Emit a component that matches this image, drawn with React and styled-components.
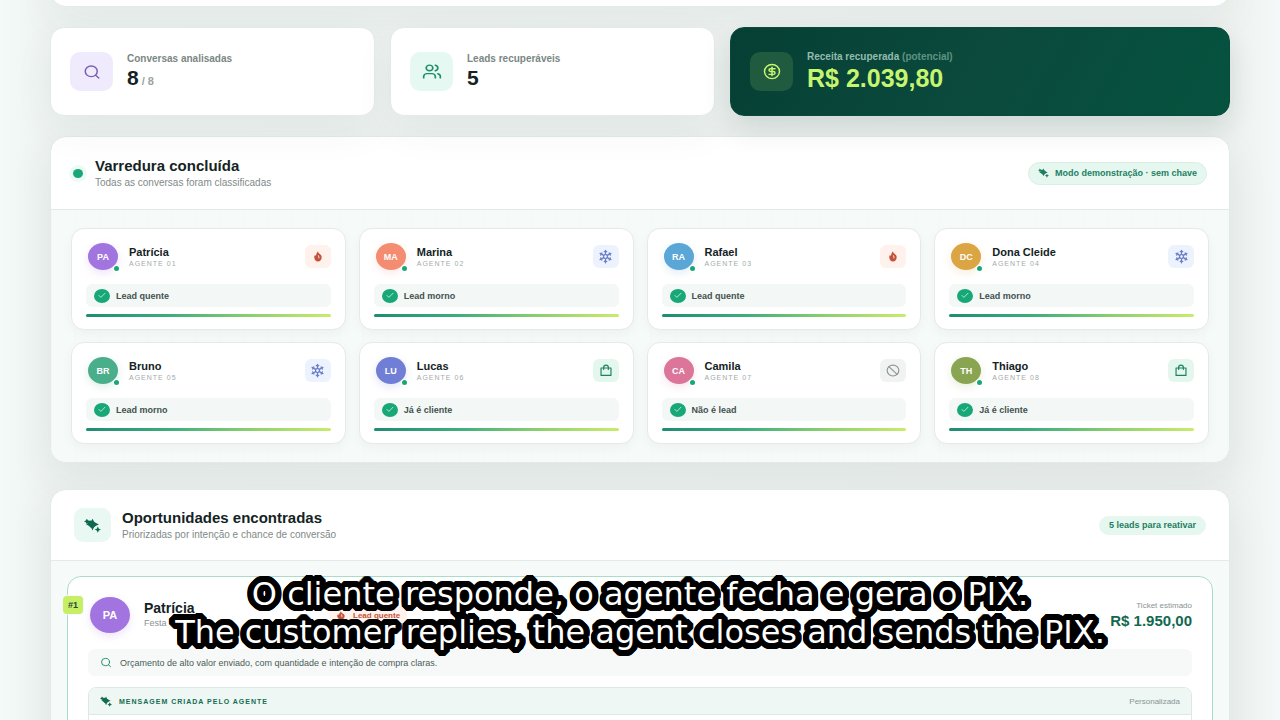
import React from "react";
import styled, { createGlobalStyle, css } from "styled-components";
import { Search, Users, CircleDollarSign, Ban, Check } from "lucide-react";
import { TbSnowflake } from "react-icons/tb";

const Global = createGlobalStyle`
  *, *::before, *::after { box-sizing: border-box; }
  body {
    margin: 0;
    background: #f2f8f6;
    color: #14231f;
    font-family: "Liberation Sans", Arial, sans-serif;
  }
  h2, h3, p { margin: 0; }
`;

const tones = {
  hot: { bg: "#fff1ec", fg: "#c4523a" },
  warm: { bg: "#edf3fe", fg: "#6b7fc8" },
  client: { bg: "#e4f7ef", fg: "#1d8262" },
  none: { bg: "#f1f3f3", fg: "#8f9696" },
};

const Page = styled.div`
  position: relative;
  display: flow-root;
  height: 100vh;
  overflow: hidden;
  padding: 0 50px;
  background: linear-gradient(90deg, #f3faf7 0, #eef3f1 50px, #eef2f0 calc(100% - 50px), #f3f9f8 100%);
`;

const surface = css`
  background: #fff;
  border: 1px solid #e3eae8;
  box-shadow: 0 14px 40px rgba(20, 60, 48, 0.06);
`;

const TopPanel = styled.div`
  ${surface}
  height: 40px;
  margin-top: -33px;
  border-radius: 16px;
`;

const Stats = styled.section`
  display: grid;
  grid-template-columns: 13fr 13fr 20fr;
  gap: 15px;
  margin-top: 20px;
`;

const StatCard = styled.article`
  ${surface}
  display: flex;
  align-items: center;
  gap: 14px;
  height: 89px;
  padding: 0 19px;
  border-radius: 14px;
  ${(p) =>
    p.$dark &&
    css`
      background: linear-gradient(120deg, #063f34, #0b4a3d 50%, #05523f);
      border-color: #0a4a3c;
      box-shadow: 0 12px 28px rgba(6, 50, 40, 0.14);
    `}
`;

const StatIcon = styled.span`
  display: grid;
  place-items: center;
  width: 43px;
  height: 39px;
  border-radius: 10px;
  background: ${(p) => p.$bg};
  color: ${(p) => p.$fg};
`;

const StatLabel = styled.p`
  font-size: 10px;
  line-height: 12px;
  font-weight: 700;
  color: ${(p) => (p.$dark ? "#93bcaf" : "#7b8784")};
  span { color: #5d9382; }
`;

const StatValue = styled.p`
  font-size: ${(p) => (p.$dark ? "25px" : "21px")};
  line-height: ${(p) => (p.$dark ? "30px" : "26px")};
  font-weight: 700;
  color: ${(p) => (p.$dark ? "#c6f56f" : "#14231f")};
  small {
    margin-left: 3px;
    font-size: 11px;
    line-height: 12px;
    color: #9aa3a1;
  }
`;

const Panel = styled.section`
  ${surface}
  margin-top: ${(p) => p.$gap};
  border-radius: 16px;
  overflow: hidden;
  box-shadow: 0 16px 44px rgba(20, 60, 48, 0.08);
`;

const PanelHead = styled.header`
  display: flex;
  align-items: center;
  gap: ${(p) => (p.$tight ? "11px" : "12px")};
  height: ${(p) => (p.$tight ? "71px" : "73px")};
  padding: 0 ${(p) => (p.$tight ? "23px" : "22px")};
  border-bottom: 1px solid #e3eae8;
`;

const HeadText = styled.div`
  flex: 1;
`;

const Title = styled.h2`
  font-size: 15px;
  line-height: 20px;
  font-weight: 700;
`;

const Subtitle = styled.p`
  font-size: 10px;
  line-height: 14px;
  color: #7f8a88;
`;

const LiveDot = styled.span`
  width: 10px;
  height: 9px;
  border-radius: 50%;
  background: #18a878;
  box-shadow: 0 0 0 4px #eefaf5;
`;

const HeadIcon = styled.span`
  display: grid;
  place-items: center;
  width: 37px;
  height: 34px;
  border-radius: 9px;
  background: #eaf8f3;
  color: #0f6a50;
`;

const Pill = styled.span`
  display: flex;
  align-items: center;
  gap: 6px;
  height: ${(p) => (p.$outlined ? "23px" : "19px")};
  padding: 0 9px;
  border: 1px solid ${(p) => (p.$outlined ? "#d9efe6" : "#e6f7f0")};
  border-radius: 12px;
  background: #e6f7f0;
  color: #1d7f60;
  font-size: 9px;
  font-weight: 700;
  white-space: nowrap;
`;

const AgentGrid = styled.div`
  display: grid;
  grid-template-columns: repeat(4, 1fr);
  gap: 12px 13px;
  padding: 18px 20px;
  background:
    repeating-linear-gradient(90deg, rgba(20, 80, 60, 0.01) 0 1px, transparent 1px 24px),
    #f6faf9;
`;

const AgentCard = styled.article`
  ${surface}
  height: 102px;
  padding: 14px;
  border-radius: 13px;
  box-shadow: 0 4px 12px rgba(20, 60, 48, 0.04);
`;

const AgentHead = styled.div`
  display: flex;
  align-items: center;
  padding-left: 2px;
`;

const Avatar = styled.span`
  position: relative;
  display: grid;
  place-items: center;
  width: ${(p) => (p.$large ? "40px" : "30px")};
  height: ${(p) => (p.$large ? "36px" : "27px")};
  border-radius: 50%;
  background: ${(p) => p.$color};
  color: #fff;
  font-size: ${(p) => (p.$large ? "11px" : "9px")};
  font-weight: 700;
  box-shadow: 0 3px 8px ${(p) => p.$color}33;
`;

const Presence = styled.i`
  position: absolute;
  right: -1px;
  bottom: -1px;
  width: 5px;
  height: 5px;
  border-radius: 50%;
  background: #18a878;
  box-shadow: 0 0 0 1px #fff;
`;

const AgentId = styled.div`
  flex: 1;
  margin-left: 11px;
`;

const AgentName = styled.h3`
  font-size: 11px;
  line-height: 13px;
`;

const AgentCode = styled.p`
  font-size: 7px;
  line-height: 9px;
  letter-spacing: 1px;
  color: #a3abaa;
`;

const ToneBox = styled.span`
  display: grid;
  place-items: center;
  width: 26px;
  height: 23px;
  border-radius: 6px;
  background: ${(p) => tones[p.$tone].bg};
  color: ${(p) => tones[p.$tone].fg};
`;

const Status = styled.p`
  display: flex;
  align-items: center;
  gap: 6px;
  height: 23px;
  margin-top: 14px;
  padding: 0 8px;
  border-radius: 6px;
  background: #f3f7f6;
  color: #42524e;
  font-size: 9px;
  font-weight: 700;
`;

const Tick = styled.span`
  display: grid;
  place-items: center;
  width: 16px;
  height: 14px;
  border-radius: 50%;
  background: #18a878;
  color: #d8fff0;
`;

const Bar = styled.div`
  height: 3px;
  margin-top: 7px;
  border-radius: 2px;
  background: linear-gradient(90deg, #1f8c74, #3fae7c 35%, #8ed070 68%, #c8ec6c);
`;

const LeadList = styled.div`
  padding: 15px 16px;
  background: #f6faf9;
`;

const LeadCard = styled.article`
  position: relative;
  padding: 20px;
  border: 1px solid #aadcca;
  border-radius: 14px;
  background: #fff;
`;

const Rank = styled.span`
  position: absolute;
  left: -5px;
  top: 19px;
  padding: 0 5px;
  border-radius: 4px;
  background: #c6ef66;
  box-shadow: 0 0 0 1px #f6faf9;
  color: #28483c;
  font-size: 9px;
  line-height: 18px;
  font-weight: 700;
`;

const LeadHead = styled.div`
  display: flex;
  align-items: center;
  padding-left: 2px;
`;

const LeadId = styled.div`
  width: 185px;
  margin-left: 14px;
`;

const LeadName = styled.h3`
  font-size: 14px;
  line-height: 16px;
`;

const LeadNote = styled.p`
  font-size: 9px;
  line-height: 14px;
  color: #8a9492;
`;

const LeadTag = styled.span`
  display: flex;
  align-items: center;
  gap: 7px;
  height: 16px;
  padding: 0 7px;
  border-radius: 8px;
  background: ${tones.hot.bg};
  color: ${tones.hot.fg};
  font-size: 8px;
  font-weight: 700;
`;

const Ticket = styled.div`
  margin-left: auto;
  text-align: right;
`;

const TicketLabel = styled.p`
  font-size: 8px;
  line-height: 12px;
  color: #8a9492;
`;

const TicketValue = styled.p`
  font-size: 15px;
  line-height: 18px;
  font-weight: 700;
  color: #11694f;
`;

const Insight = styled.p`
  display: flex;
  align-items: center;
  gap: 8px;
  height: 27px;
  margin-top: 16px;
  padding: 0 12px;
  border-radius: 7px;
  background: #f6f9f8;
  color: #4c5b57;
  font-size: 9px;
  svg { color: #1d8e6b; }
`;

const Message = styled.div`
  height: 120px;
  margin-top: 11px;
  border: 1px solid #dde9e5;
  border-radius: 8px;
  background: #fff;
  overflow: hidden;
`;

const MessageHead = styled.header`
  display: flex;
  align-items: center;
  gap: 7px;
  height: 27px;
  padding: 0 11px;
  border-bottom: 1px solid #dde9e5;
  background: #eef7f4;
  color: #146c52;
`;

const MessageTitle = styled.h3`
  flex: 1;
  font-size: 7px;
  letter-spacing: 1px;
`;

const MessageNote = styled.span`
  font-size: 8px;
  color: #8a9492;
`;

const ring = (radius, steps) =>
  Array.from({ length: steps }, (_, i) => {
    const a = (i / steps) * Math.PI * 2;
    return `${Math.round(Math.cos(a) * radius)}px ${Math.round(Math.sin(a) * radius)}px 0 #000`;
  }).join(", ");

const Caption = styled.p`
  position: absolute;
  left: 0;
  right: 0;
  bottom: 69px;
  color: #fff;
  font-family: "DejaVu Sans", sans-serif;
  font-size: 32px;
  line-height: 38px;
  text-align: center;
  text-shadow: ${ring(6, 32)}, ${ring(3, 16)};
  span { display: block; }
`;

function Sparkle({ width, height }) {
  return (
    <svg width={width} height={height} viewBox="0 0 24 24" preserveAspectRatio="none" fill="currentColor" aria-hidden="true">
      <path d="M12 1l2.500 5.500L21 10.500l-6.500 3L12 20l-2.500-6.500L3 10.500l6.500-4z" />
      <path d="M4 1l1.500 2.500L9 5 6 7.500 4 10 2.500 6.800 0 5.500l2.500-1.500z" />
      <path d="M19.500 13.500l1.500 3.500L24 18.500 21 20l-1.500 3.500L18 20l-3-1.500 3-1.500z" />
      <path d="M5 5l4-1 3 1 4 3 1 4-4 4-4-1-3-4z" />
    </svg>
  );
}

function Flame({ width, height }) {
  return (
    <svg width={width} height={height} viewBox="0 0 24 24" preserveAspectRatio="none" aria-hidden="true">
      <path fill="currentColor" d="M12 1c1 4 4 5 7.500 8.500C23 15 19 23 12 23S1 15 4 9.500c1 .5 2 .5 3.500 0C8 6 9 3.500 12 1z" />
      <path fill="#fff" opacity=".75" d="M12 8c2 2 4.500 4 3.500 7.500-.5 1.500-2 1.500-2.500 0-.4-1.500.5-2-.5-3-1-1-1-2.500-.5-4.500z" />
    </svg>
  );
}

function Bag() {
  return (
    <svg width="14" height="13" viewBox="0 0 24 24" preserveAspectRatio="none" fill="none" stroke="currentColor" strokeWidth="2" strokeLinejoin="round" strokeLinecap="round" aria-hidden="true">
      <path d="M3.500 7.500h17v13.500h-17z" />
      <path d="M8 10V6a4 4 0 0 1 8 0v4" />
    </svg>
  );
}

const toneIcon = {
  hot: <Flame width="10" height="11" />,
  warm: <TbSnowflake size={15} />,
  client: <Bag />,
  none: <Ban width={14} height={13} preserveAspectRatio="none" strokeWidth={2} />,
};

const agents = [
  ["Patrícia", "PA", "#a274e0", "hot", "Lead quente"],
  ["Marina", "MA", "#f48c72", "warm", "Lead morno"],
  ["Rafael", "RA", "#5aa6d6", "hot", "Lead quente"],
  ["Dona Cleide", "DC", "#dba544", "warm", "Lead morno"],
  ["Bruno", "BR", "#4bae8a", "warm", "Lead morno"],
  ["Lucas", "LU", "#707ed6", "client", "Já é cliente"],
  ["Camila", "CA", "#db7599", "none", "Não é lead"],
  ["Thiago", "TH", "#8aa552", "client", "Já é cliente"],
];

function Agent({ data, index }) {
  const [name, initials, color, tone, status] = data;
  return (
    <AgentCard>
      <AgentHead>
        <Avatar $color={color}>
          {initials}
          <Presence />
        </Avatar>
        <AgentId>
          <AgentName>{name}</AgentName>
          <AgentCode>AGENTE 0{index + 1}</AgentCode>
        </AgentId>
        <ToneBox $tone={tone}>{toneIcon[tone]}</ToneBox>
      </AgentHead>
      <Status>
        <Tick>
          <Check width={10} height={9} strokeWidth={2} />
        </Tick>
        {status}
      </Status>
      <Bar />
    </AgentCard>
  );
}

export default function App() {
  return (
    <Page>
      <Global />
      <TopPanel />
      <Stats>
        <StatCard>
          <StatIcon $bg="#f0eafd" $fg="#7a5fb0">
            <Search width={18} height={16} preserveAspectRatio="none" />
          </StatIcon>
          <div>
            <StatLabel>Conversas analisadas</StatLabel>
            <StatValue>
              8<small>/ 8</small>
            </StatValue>
          </div>
        </StatCard>
        <StatCard>
          <StatIcon $bg="#e5f8f1" $fg="#1d8e6b">
            <Users width={20} height={17} preserveAspectRatio="none" />
          </StatIcon>
          <div>
            <StatLabel>Leads recuperáveis</StatLabel>
            <StatValue>5</StatValue>
          </div>
        </StatCard>
        <StatCard $dark>
          <StatIcon $bg="#205a3f" $fg="#c6f56f">
            <CircleDollarSign width={18} height={17} preserveAspectRatio="none" />
          </StatIcon>
          <div>
            <StatLabel $dark>
              Receita recuperada <span>(potencial)</span>
            </StatLabel>
            <StatValue $dark>R$ 2.039,80</StatValue>
          </div>
        </StatCard>
      </Stats>

      <Panel $gap="20px">
        <PanelHead>
          <LiveDot />
          <HeadText>
            <Title>Varredura concluída</Title>
            <Subtitle>Todas as conversas foram classificadas</Subtitle>
          </HeadText>
          <Pill $outlined>
            <Sparkle width="11" height="10" />
            Modo demonstração · sem chave
          </Pill>
        </PanelHead>
        <AgentGrid>
          {agents.map((agent, i) => (
            <Agent key={agent[0]} data={agent} index={i} />
          ))}
        </AgentGrid>
      </Panel>

      <Panel $gap="26px">
        <PanelHead $tight>
          <HeadIcon>
            <Sparkle width="17" height="15" />
          </HeadIcon>
          <HeadText>
            <Title>Oportunidades encontradas</Title>
            <Subtitle>Priorizadas por intenção e chance de conversão</Subtitle>
          </HeadText>
          <Pill>5 leads para reativar</Pill>
        </PanelHead>
        <LeadList>
          <LeadCard>
            <Rank>#1</Rank>
            <LeadHead>
              <Avatar $large $color="#a274e0">PA</Avatar>
              <LeadId>
                <LeadName>Patrícia</LeadName>
                <LeadNote>Festa</LeadNote>
              </LeadId>
              <LeadTag>
                <Flame width="10" height="9" />
                Lead quente
              </LeadTag>
              <Ticket>
                <TicketLabel>Ticket estimado</TicketLabel>
                <TicketValue>R$ 1.950,00</TicketValue>
              </Ticket>
            </LeadHead>
            <Insight>
              <Search width={12} height={11} preserveAspectRatio="none" />
              Orçamento de alto valor enviado, com quantidade e intenção de compra claras.
            </Insight>
            <Message>
              <MessageHead>
                <Sparkle width="12" height="11" />
                <MessageTitle>MENSAGEM CRIADA PELO AGENTE</MessageTitle>
                <MessageNote>Personalizada</MessageNote>
              </MessageHead>
            </Message>
          </LeadCard>
        </LeadList>
      </Panel>

      <Caption>
        <span>O cliente responde, o agente fecha e gera o PIX.</span>
        <span>The customer replies, the agent closes and sends the PIX.</span>
      </Caption>
    </Page>
  );
}
